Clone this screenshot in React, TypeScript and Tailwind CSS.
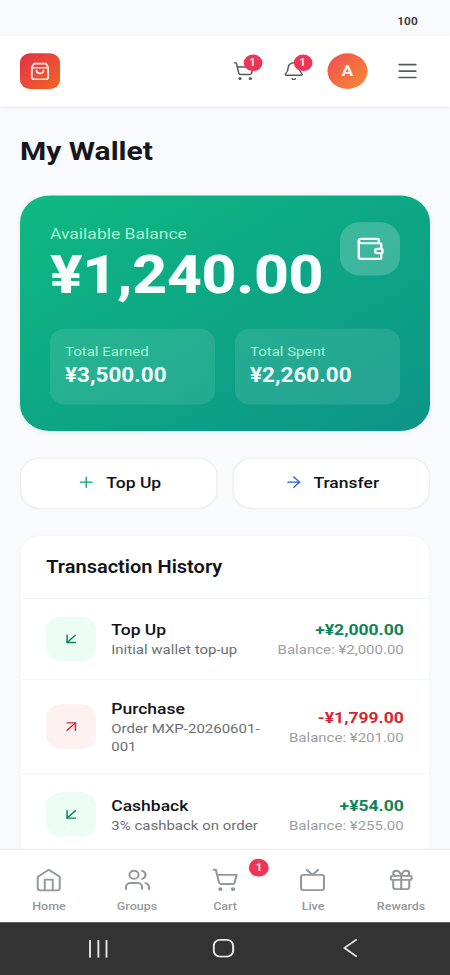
import type { ReactNode } from "react";
import {
  ArrowDownLeft,
  ArrowRight,
  ArrowUpRight,
  Bell,
  Gift,
  Menu,
  Plus,
  ShoppingCart,
  Tv,
  Users,
  Wallet,
} from "lucide-react";

type Transaction = {
  title: string;
  note: string;
  amount: string;
  balance: string;
  credit: boolean;
};

const transactions: Transaction[] = [
  { title: "Top Up", note: "Initial wallet top-up", amount: "+¥2,000.00", balance: "¥2,000.00", credit: true },
  { title: "Purchase", note: "Order MXP-20260601-001", amount: "-¥1,799.00", balance: "¥201.00", credit: false },
  { title: "Cashback", note: "3% cashback on order", amount: "+¥54.00", balance: "¥255.00", credit: true },
];

function BagLogo() {
  return (
    <svg className="size-[18px]" viewBox="0 0 18 18" fill="none" stroke="currentColor" strokeWidth="1.5" strokeLinecap="round" strokeLinejoin="round">
      <path d="M2.5 5.5 4.2 2.2h9.6l1.7 3.3v9a1.8 1.8 0 0 1-1.8 1.8H4.3a1.8 1.8 0 0 1-1.8-1.8Z" />
      <path d="M2.5 6h13" />
      <path d="M6.2 8.6c.3 3.2 5.3 3.2 5.6 0" />
    </svg>
  );
}

function Header() {
  return (
    <header className="z-10 flex h-16 shrink-0 items-center bg-white px-4 shadow-[0_1px_3px_rgba(15,40,50,0.1)]">
      <div className="flex size-8 items-center justify-center rounded-lg bg-linear-to-br from-[#e22d45] to-[#f4631c] text-[#ffe9e4]">
        <BagLogo />
      </div>
      <div className="ml-auto flex items-center text-[#55595f]">
        <div className="relative flex size-9 items-center justify-center">
          <ShoppingCart size={18} strokeWidth={1.6} />
          <Badge className="right-[3.5px] top-[2.5px] size-[15px]" />
        </div>
        <div className="relative ml-1 flex size-9 items-center justify-center">
          <Bell size={18} strokeWidth={1.6} />
          <Badge className="right-[3.5px] top-[2.5px] size-[15px]" />
        </div>
        <div className="ml-[9px] flex size-8 items-center justify-center rounded-full bg-linear-to-br from-[#f04a4c] to-[#f58a35] text-sm font-bold text-[#fff1ec]">
          <span className="-translate-y-px">A</span>
        </div>
        <div className="ml-[14px] flex size-9 items-center justify-center">
          <Menu size={20} strokeWidth={1.7} />
        </div>
      </div>
    </header>
  );
}

function Badge({ className }: { className: string }) {
  return (
    <span className={`absolute flex items-center justify-center rounded-full bg-[#ee3558] text-[9px] font-bold leading-none text-[#ffe4e8] ${className}`}>
      1
    </span>
  );
}

function Stat({ label, value }: { label: string; value: string }) {
  return (
    <div className="flex-1 rounded-xl bg-white/10 p-3">
      <p className="text-xs text-[#a7f3d0]">{label}</p>
      <p className="text-lg font-bold leading-7 text-[#f0fffa]">{value}</p>
    </div>
  );
}

function BalanceCard() {
  return (
    <section className="mt-6 rounded-3xl bg-linear-to-br from-[#10b981] to-[#0d9488] p-6 shadow-[0_1px_5px_rgba(16,150,130,0.08)]">
      <div className="flex h-[72px] items-start justify-between">
        <div>
          <p className="text-sm leading-5 text-[#a7f3d0]">Available Balance</p>
          <p className="mt-[3px] whitespace-nowrap text-[48.5px] font-extrabold leading-[49px] tracking-[-0.25px] text-[#f7fffd]">¥1,240.00</p>
        </div>
        <div className="-ml-4 flex size-12 shrink-0 items-center justify-center rounded-2xl bg-white/20 text-white">
          <Wallet size={24} strokeWidth={1.9} />
        </div>
      </div>
      <div className="mt-6 flex gap-4">
        <Stat label="Total Earned" value="¥3,500.00" />
        <Stat label="Total Spent" value="¥2,260.00" />
      </div>
    </section>
  );
}

function ActionButton({ icon, label }: { icon: ReactNode; label: string }) {
  return (
    <button className="flex h-[46px] flex-1 items-center justify-center gap-2 rounded-2xl border border-[#eceef0] bg-white pb-[2px] text-sm font-medium text-[#111418] shadow-[0_1px_2px_rgba(0,0,0,0.02)]">
      {icon}
      {label}
    </button>
  );
}

function TransactionRow({ item }: { item: Transaction }) {
  return (
    <li className="flex items-center gap-3 border-b border-[#f5f6f7] px-5 py-4">
      <div
        className={
          item.credit
            ? "flex size-10 shrink-0 items-center justify-center rounded-xl bg-[#ebfdf4] text-[#0b8457]"
            : "flex size-10 shrink-0 items-center justify-center rounded-xl bg-[#fef1f1] text-[#d32632]"
        }
      >
        {item.credit ? <ArrowDownLeft size={16} strokeWidth={1.8} /> : <ArrowUpRight size={16} strokeWidth={1.8} />}
      </div>
      <div className="min-w-0 flex-1">
        <p className="text-sm font-medium text-[#111418]">{item.title}</p>
        <p className="text-xs text-[#6b7075]">{item.note}</p>
      </div>
      <div className="shrink-0 text-right">
        <p className={item.credit ? "text-sm font-bold text-[#0b8457]" : "text-sm font-bold text-[#d32632]"}>{item.amount}</p>
        <p className="text-xs text-[#9b9fa4]">Balance: {item.balance}</p>
      </div>
    </li>
  );
}

function NavItem({ icon, label, badge }: { icon: ReactNode; label: string; badge?: boolean }) {
  return (
    <div className="relative flex flex-1 flex-col items-center pt-4">
      {icon}
      <span className="mt-[5px] text-[10px] font-medium leading-[15px]">{label}</span>
      {badge && <Badge className="right-0 top-2 size-4" />}
    </div>
  );
}

function HomeIcon() {
  return (
    <svg className="size-[22px]" viewBox="0 0 22 22" fill="none" stroke="currentColor" strokeWidth="1.6" strokeLinecap="round" strokeLinejoin="round">
      <path d="M2.2 8.2 11 1.9l8.8 6.3v10.3a1.9 1.9 0 0 1-1.9 1.9H4.1a1.9 1.9 0 0 1-1.9-1.9Z" />
      <path d="M7.8 20.4v-9.6h6.4v9.6" />
    </svg>
  );
}

function BottomNav() {
  return (
    <nav className="z-10 flex h-[66px] shrink-0 border-t border-[#e9ebed] bg-white px-1 text-[#94989b]">
      <NavItem icon={<HomeIcon />} label="Home" />
      <NavItem icon={<Users size={22} strokeWidth={1.8} />} label="Groups" />
      <NavItem icon={<ShoppingCart size={22} strokeWidth={1.8} />} label="Cart" badge />
      <NavItem icon={<Tv size={22} strokeWidth={1.8} />} label="Live" />
      <NavItem icon={<Gift size={22} strokeWidth={1.8} />} label="Rewards" />
    </nav>
  );
}

function SystemBar() {
  return (
    <div className="flex h-[48px] shrink-0 items-center justify-between bg-[#333] pb-px pl-[70px] pr-[74px] text-[#e8e8e8]">
      <svg className="h-4 w-[17px]" viewBox="0 0 17 16" stroke="currentColor" strokeWidth="1.5">
        <path d="M2 0v16M8.7 0v16M15.2 0v16" />
      </svg>
      <svg className="mr-[3px] h-[17px] w-[18px]" viewBox="0 0 18 17" fill="none" stroke="currentColor" strokeWidth="1.6">
        <rect x="1" y="1" width="15.5" height="15" rx="5" />
      </svg>
      <svg className="h-[17px] w-[12px]" viewBox="0 0 12 17" fill="none" stroke="currentColor" strokeWidth="1.5">
        <path d="M11.4.5 1.6 8.2 11.4 16" />
      </svg>
    </div>
  );
}

export default function App() {
  return (
    <div className="h-[975px] w-[450px] overflow-hidden bg-[#333]">
      <div className="flex h-[878px] w-[360px] origin-top-left scale-x-125 scale-y-[1.111] flex-col bg-[#f9fafc] font-[Roboto,sans-serif]">
        <div className="flex h-[32px] shrink-0 items-center justify-end pr-[26px] pt-[5px] text-[10px] font-semibold text-[#33363a]">
          <span className="origin-right translate-y-[0.5px] scale-x-95">100</span>
        </div>
        <Header />
        <main className="min-h-0 flex-1 overflow-hidden px-4 pt-6">
          <h1 className="text-2xl font-bold text-[#15171c]">My Wallet</h1>
          <BalanceCard />
          <div className="mt-6 flex gap-3">
            <ActionButton icon={<Plus size={16} strokeWidth={1.6} className="text-[#0d9f6e]" />} label="Top Up" />
            <ActionButton icon={<ArrowRight size={16} strokeWidth={1.7} className="text-[#2563c9]" />} label="Transfer" />
          </div>
          <section className="mt-6 rounded-2xl border border-[#f8f9fa] bg-white pb-6 shadow-[0_1px_3px_rgba(0,0,0,0.03)]">
            <h2 className="border-b border-[#f5f6f7] px-5 py-4 text-base font-semibold leading-[23px] text-[#111418]">Transaction History</h2>
            <ul>
              {transactions.map((item) => (
                <TransactionRow key={item.title} item={item} />
              ))}
            </ul>
          </section>
        </main>
        <BottomNav />
        <SystemBar />
      </div>
    </div>
  );
}
